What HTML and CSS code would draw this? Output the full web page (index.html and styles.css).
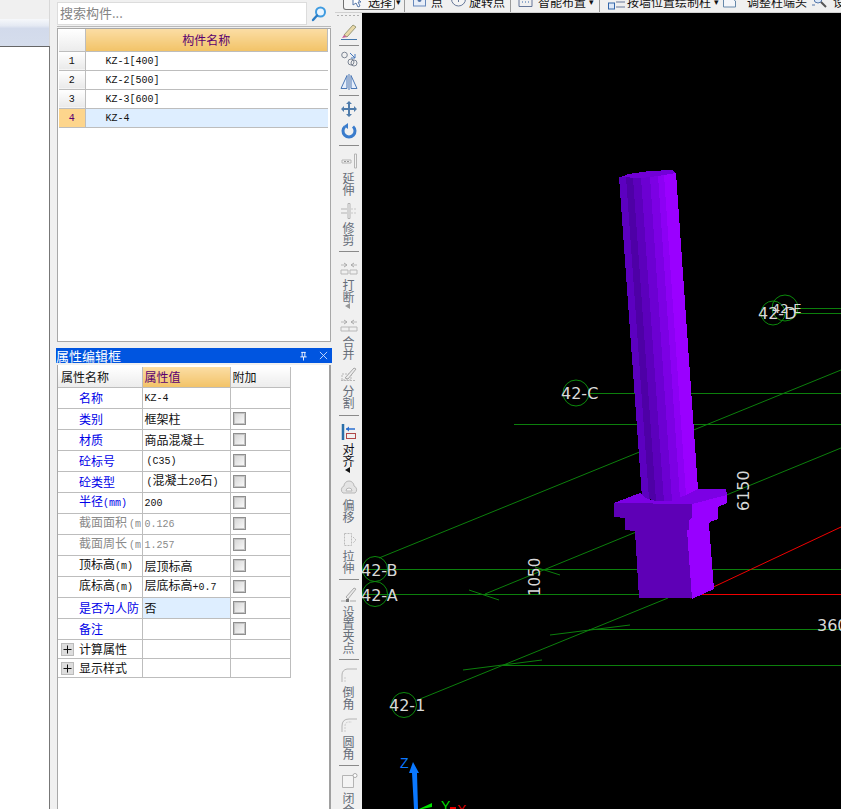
FILE: index.html
```html
<!DOCTYPE html>
<html lang="zh">
<head>
<meta charset="utf-8">
<title>构件属性</title>
<link rel="stylesheet" href="styles.css">
</head>
<body>
<div class="app">
  <aside class="side">
    <div class="side-top"></div>
    <div class="side-head"></div>
    <div class="side-body"></div>
  </aside>

  <section class="panel">
    <div class="search-row">
      <div class="search-box">搜索构件...</div>
      <svg class="search-ic" viewBox="0 0 16 16"><circle cx="9.500" cy="6" r="4.500" fill="#eaf5ff" stroke="#3f9be0" stroke-width="2"/><path d="M6 9.500 2 14" stroke="#2a7cc4" stroke-width="2.400" stroke-linecap="round"/></svg>
    </div>
    <div class="list-frame">
      <table class="list">
        <tr class="list-head"><th class="num"></th><th class="list-title">构件名称</th></tr>
        <tr><td class="num"><span class="lat">1</span></td><td class="lname"><span class="lat">KZ-1[400]</span></td></tr>
        <tr><td class="num"><span class="lat">2</span></td><td class="lname"><span class="lat">KZ-2[500]</span></td></tr>
        <tr><td class="num"><span class="lat">3</span></td><td class="lname"><span class="lat">KZ-3[600]</span></td></tr>
        <tr class="active"><td class="num"><span class="lat">4</span></td><td class="lname"><span class="lat">KZ-4</span></td></tr>
      </table>
    </div>
    <div class="prop-title">
      <span>属性编辑框</span>
      <svg class="pin" viewBox="0 0 10 10"><path d="M2.500 1h5M3.500 1v5M6.500 1v5M1.500 6h7M5 6v4" stroke="#fff" fill="none"/></svg>
      <svg class="close" viewBox="0 0 10 10"><path d="M1 1l8 8M9 1l-8 8" stroke="#cfe0ff" fill="none"/></svg>
    </div>
    <div class="prop-frame">
      <table class="prop">
        <colgroup><col class="c1"><col class="c2"><col class="c3"></colgroup>
        <tr class="prop-head"><th class="h-name">属性名称</th><th class="h-val">属性值</th><th class="h-add">附加</th></tr>
        <tr><td class="n blue">名称</td><td class="v"><span class="lat">KZ-4</span></td><td></td></tr>
        <tr><td class="n blue">类别</td><td class="v">框架柱</td><td><i class="cb"></i></td></tr>
        <tr><td class="n blue">材质</td><td class="v">商品混凝土</td><td><i class="cb"></i></td></tr>
        <tr><td class="n blue">砼标号</td><td class="v"><span class="lat ind">(C35)</span></td><td><i class="cb"></i></td></tr>
        <tr><td class="n blue">砼类型</td><td class="v"><span class="lat ind">(</span>混凝土<span class="lat">20</span>石<span class="lat">)</span></td><td><i class="cb"></i></td></tr>
        <tr><td class="n blue">半径<span class="lat">(mm)</span></td><td class="v"><span class="lat">200</span></td><td><i class="cb"></i></td></tr>
        <tr class="off"><td class="n">截面面积<span class="lat ind">(m</span></td><td class="v"><span class="lat">0.126</span></td><td><i class="cb"></i></td></tr>
        <tr class="off"><td class="n">截面周长<span class="lat ind">(m</span></td><td class="v"><span class="lat">1.257</span></td><td><i class="cb"></i></td></tr>
        <tr><td class="n">顶标高<span class="lat">(m)</span></td><td class="v">层顶标高</td><td><i class="cb"></i></td></tr>
        <tr><td class="n">底标高<span class="lat">(m)</span></td><td class="v">层底标高<span class="lat">+0.7</span></td><td><i class="cb"></i></td></tr>
        <tr><td class="n blue">是否为人防</td><td class="v sel">否</td><td><i class="cb"></i></td></tr>
        <tr><td class="n blue">备注</td><td class="v"></td><td><i class="cb"></i></td></tr>
        <tr class="group"><td class="n"><svg class="plus" viewBox="0 0 13 13"><rect x=".5" y=".5" width="12" height="12" fill="#ddd" stroke="#bbb"/><path d="M2.500 6.500h8M6.500 2.500v8" stroke="#111" fill="none"/></svg>计算属性</td><td></td><td></td></tr>
        <tr class="group"><td class="n"><svg class="plus" viewBox="0 0 13 13"><rect x=".5" y=".5" width="12" height="12" fill="#ddd" stroke="#bbb"/><path d="M2.500 6.500h8M6.500 2.500v8" stroke="#111" fill="none"/></svg>显示样式</td><td></td><td></td></tr>
      </table>
    </div>
  </section>

  <main class="main">
    <div class="topbar">
      <div class="tb-btn">
        <svg class="tb-cur" viewBox="0 0 12 14"><path d="M3 0v10l3-2 2 4 2-1-2-4h3z" fill="#fff" stroke="#5577aa"/></svg>
        <span>选择</span>
      </div>
      <span class="drop m1">▾</span>
      <i class="tb-sep m3"></i>
      <svg class="tb-ic m8" viewBox="0 0 13 14"><rect x=".5" y="-4" width="12" height="13" fill="#e8eef8" stroke="#6688bb"/><circle cx="6.500" cy="3" r="2" fill="#5577aa"/></svg>
      <span class="m5">点</span>
      <svg class="tb-ic wide m8" viewBox="0 0 15 14"><circle cx="7.500" cy="2" r="7" fill="#f4f4f4" stroke="#667799"/><path d="M7.500-1v6M4.500 2h6" stroke="#667799"/></svg>
      <span class="m3">旋转点</span>
      <i class="tb-sep m5"></i>
      <svg class="tb-ic wide m7" viewBox="0 0 15 14"><path d="M1 9.500h13M1 9.500V0M14 9.500V0" stroke="#667799" fill="none"/><path d="M4 5h1M7 5h1M10 5h1" stroke="#3366aa"/></svg>
      <span class="m5">智能布置</span>
      <span class="drop m3">▾</span>
      <i class="tb-sep m5"></i>
      <svg class="tb-ic wide2 m8" viewBox="0 0 17 14"><rect x=".5" y="6" width="6" height="6" fill="#dde8f8" stroke="#3366aa"/><path d="M8 1h9M8 5h9M8 10h9" stroke="#667799"/></svg>
      <span class="m2">按墙位置绘制柱</span>
      <span class="drop m3">▾</span>
      <svg class="tb-ic m4" viewBox="0 0 13 14"><path d="M.5 10V1h8l4 3v6z" fill="#f4f6fa" stroke="#6688aa"/></svg>
      <span class="m11">调整柱端头</span>
      <svg class="tb-ic wide2 m5" viewBox="0 0 17 14"><circle cx="6" cy="2" r="4" fill="#dbe8f8" stroke="#5577aa"/><path d="M9 5l5 5" stroke="#555" stroke-width="2"/><path d="M0 8h3" stroke="#5577aa"/></svg>
      <span class="m4">设</span>
    </div>

    <div class="work">
      <nav class="tools">
        <div class="grip"></div>

        <svg class="ic mt5" viewBox="0 0 18 16"><path d="M4 11 13 1l3 2-9 10z" fill="#e8d8a8" stroke="#9a9a78"/><path d="M4 11l3 2-5 1z" fill="#c8609a"/><path d="M1 15.500h16" stroke="#4477aa"/></svg>
        <div class="sep mt5"></div>
        <svg class="ic mt2" viewBox="0 0 18 16"><circle cx="4.500" cy="4" r="2.800" fill="none" stroke="#7d8694"/><circle cx="11" cy="11" r="3" fill="none" stroke="#7d8694"/><circle cx="14" cy="12" r="3" fill="none" stroke="#7d8694"/><path d="M10 2l5 5M15 3v4h-4" stroke="#4477bb" fill="none"/></svg>
        <svg class="ic mt7" viewBox="0 0 18 16"><path d="M7 1.500v13H1zM11 1.500v13h6z" fill="#e6eefa" stroke="#4a77b5"/><path d="M9 0v16" stroke="#4a77b5"/></svg>
        <div class="sep mt5"></div>
        <svg class="ic mt2" viewBox="0 0 18 16"><path d="M9 1v14M2 8h14" stroke="#4f7cab" stroke-width="2"/><path d="M9 0l3 3H6zM9 16l3-3H6zM1 8l3-3v6zM17 8l-3-3v6z" fill="#4f7cab"/></svg>
        <svg class="ic mt6" viewBox="0 0 18 16"><path d="M5 3.500a6 6 0 1 0 8 0" fill="none" stroke="#3a7ccc" stroke-width="3"/><path d="M8 0v6L4 3z" fill="#3a7ccc"/></svg>
        <div class="sep mt6"></div>

        <div class="tool mt4"><svg class="ic" viewBox="0 0 18 16"><path d="M14.500 1h2v14h-2zM2 7h9v3H2z" fill="#f2f2f2" stroke="#b4b4b4"/><path d="M4 8.500h6" stroke="#999" stroke-dasharray="2 1"/></svg><span class="vt">延伸</span></div>
        <div class="tool mt7"><svg class="ic" viewBox="0 0 18 16"><path d="M8 .5h2v15H8z" fill="#f2f2f2" stroke="#b4b4b4"/><path d="M1 6h6M1 10h6" stroke="#b4b4b4"/><path d="M11 6h6M11 10h6" stroke="#c8c8c8" stroke-dasharray="2 1"/></svg><span class="vt">修剪</span></div>
        <div class="sep mt5"></div>
        <div class="tool mt5"><svg class="ic" viewBox="0 0 18 16"><path d="M1 5h6M11 5h6M1 10h7v4H1zM10 10h7v4h-7z" fill="none" stroke="#b8b8b8"/><path d="M4 3l3 2-3 2M14 3l-3 2 3 2" fill="none" stroke="#aaa"/></svg><span class="vt">打断</span></div>
        <div class="tool-arrow"></div>
        <div class="tool mt8"><svg class="ic" viewBox="0 0 18 16"><path d="M1 5h6M11 5h6M1 10h16v4H1zM9 10v4" fill="none" stroke="#b8b8b8"/><path d="M4 3l3 2-3 2M14 3l-3 2 3 2" fill="none" stroke="#aaa"/></svg><span class="vt">合并</span></div>
        <div class="tool mt6"><svg class="ic" viewBox="0 0 18 16"><path d="M1 14.500h15M2 8h9v6H2z" fill="none" stroke="#b8b8b8" stroke-dasharray="2 1"/><path d="M5 12 14 2l2 1-8 10z" fill="#ececec" stroke="#a8a8a8"/></svg><span class="vt">分割</span></div>
        <div class="sep mt6"></div>
        <div class="tool mt5"><svg class="ic" viewBox="0 0 18 16"><path d="M3 0v16" stroke="#2a6fa8" stroke-width="2.500"/><path d="M6 5h9" stroke="#2a6fd0" stroke-width="1.500"/><path d="M6 5l3-2.500v5z" fill="#2a6fd0"/><rect x="6.500" y="9.500" width="9" height="5" fill="none" stroke="#b04848"/></svg><span class="vt dark">对齐</span></div>
        <div class="tool-arrow dark-arrow"></div>
        <div class="tool mt7"><svg class="ic" viewBox="0 0 18 16"><path d="M3 13a4 4 0 0 1 1-7 5 5 0 0 1 10 0 4 4 0 0 1 1 7z" fill="#e4e4e4" stroke="#b8b8b8"/><path d="M6 11a3 3 0 0 1 6 0z" fill="#f6f6f6" stroke="#b8b8b8"/></svg><span class="vt">偏移</span></div>
        <div class="tool mt8"><svg class="ic" viewBox="0 0 18 16"><path d="M4.500 2.500h7v12h-7zM13 6l3 3-3 3" fill="none" stroke="#bbb" stroke-dasharray="2 1"/></svg><span class="vt">拉伸</span></div>
        <div class="sep mt5"></div>
        <div class="tool mt4"><svg class="ic" viewBox="0 0 18 16"><path d="M6 10 14 1l2 1-8 10z" fill="#e8e8e8" stroke="#aaa"/><path d="M1 14h5M10 14h6" stroke="#aaa"/><rect x="6" y="12" width="3" height="3" fill="#777"/></svg><span class="vt">设置夹点</span></div>
        <div class="sep mt5"></div>
        <div class="tool mt4"><svg class="ic" viewBox="0 0 18 16"><path d="M2 15V8q0-5 5-6h10" fill="none" stroke="#b4b4b4"/><path d="M5 15V9" stroke="#ccc" stroke-dasharray="2 1"/></svg><span class="vt">倒角</span></div>
        <div class="tool mt7"><svg class="ic" viewBox="0 0 18 16"><path d="M2 15V9q0-7 7-7h8" fill="none" stroke="#b4b4b4"/><path d="M5 15V9q0-4 4-4h3" fill="none" stroke="#ccc" stroke-dasharray="2 1"/></svg><span class="vt">圆角</span></div>
        <div class="sep mt5"></div>
        <div class="tool mt4"><svg class="ic" viewBox="0 0 18 16"><path d="M2.500 2.500h11v12h-11z" fill="#f4f4f4" stroke="#b4b4b4"/><circle cx="15" cy="2.500" r="2" fill="#fff" stroke="#aaa"/></svg><span class="vt">闭合</span></div>
      </nav>

      <div class="canvas">
        <svg class="scene" viewBox="362 13 479 796">
          <g class="ln">
            <path d="M362 569.500H841M362 594.500H640M590 393.500H841M514 424.500H841M589 629.500H841M502 665.500H841M790 308.500H841M795 313.500H841"/>
            <path d="M379 558 841 370M485 594 841 448M420 699 668 598"/>
            <path d="M469 590 499 600M535 567 560 575M463 670 542 660M550 635 630 625"/>
          </g>
          <path class="red" d="M690 594.500H841M690 598 841 527"/>
          <g class="ring">
            <circle cx="375" cy="569" r="12.500"/><circle cx="375" cy="594" r="12.500"/>
            <circle cx="404" cy="705" r="12.500"/><circle cx="576" cy="393" r="13"/>
            <circle cx="773" cy="313" r="12"/><circle cx="785" cy="308" r="13"/>
          </g>
          <g class="lbl">
            <text x="361" y="576">42-B</text><text x="361" y="601">42-A</text>
            <text x="389" y="711">42-1</text><text x="561" y="399">42-C</text>
            <text x="772" y="313" class="sm">42-E</text><text x="758" y="319">42-D</text>
            <text x="817" y="631">360</text>
            <text transform="translate(540 596) rotate(-90)" class="dim">1050</text>
            <text transform="translate(749 511) rotate(-90)">6150</text>
          </g>

          <g class="solid">
            <polygon class="c-top" points="619,178 628,174 650,171 672,170 676,174 676,180 619,182"/>
            <polygon fill="#5c00c0" points="619,177 626,177 649,499 642,498"/>
            <polygon fill="#4e00a6" points="626,177 633,178 656,501 649,499"/>
            <polygon fill="#5c00bc" points="633,178 641,178 664,502 656,501"/>
            <polygon fill="#6c00d2" points="641,178 650,177 672,501 664,502"/>
            <polygon fill="#7c00e4" points="650,177 658,176 680,499 672,501"/>
            <polygon fill="#8c00f4" points="658,176 664,175 686,495 680,499"/>
            <polygon fill="#9a00ff" points="664,175 676,173 698,489 686,495"/>

            <polygon class="c-cap" points="614,503 640,493 645,498 656,501 672,501 686,495 698,489 726,489 727,495 692,504"/>
            <polygon class="c-front" points="614,503 692,504 692,518 689,520 689,530 687,530 692,598 639,598 635,531 625,530 625,518 614,517"/>
            <polygon class="c-side" points="692,504 727,495 727,503 718,507 718,519 710,522 709,525 714,589 692,599 687,530 689,530 689,520 692,518"/>
          </g>

          <g class="axis">
            <path class="ax-b" d="M413 762l6 11h-2l1 36h-4l-2-36h-3z"/>
            <path class="ax-g" d="M419 809l13-6v4l-10 2z"/>
            <path class="ax-r" d="M450 807h6v2h-6z"/>
            <text x="400" y="768" class="z">Z</text>
            <text x="441" y="811" class="y">Y</text>
            <text x="457" y="815" class="x">X</text>
          </g>
        </svg>
      </div>
    </div>
  </main>
</div>
</body>
</html>
```
FILE: styles.css
```css
* { box-sizing: border-box; }
html, body { margin: 0; height: 100%; }
body {
  width: 841px; height: 809px; overflow: hidden;
  font: 12px/14px "Noto Sans CJK SC", "Liberation Sans", sans-serif;
  color: #111; background: #f0f0f0;
}
.app { display: grid; grid-template-columns: 50px 285px 506px; height: 809px; }
.lat { font-family: "Liberation Mono", "DejaVu Sans Mono", monospace; font-size: 10px; }
.ind { margin-left: 2px; }

/* left strip */
.side { display: flex; flex-direction: column; height: 809px; }
.side-top { height: 19px; background: #f0f0f0; border-right: 1px solid #d8d8d8; }
.side-head { height: 27px; background: linear-gradient(#f6f8fb 0, #e4e9f3 25%, #d2daeb 35%, #d5ddec 100%); border-right: 1px solid #d8d8d8; }
.side-body { flex: 1; background: #fff; border-top: 1px solid #666; border-right: 1px solid #777; }

/* component panel */
.panel { display: flex; flex-direction: column; padding-left: 7px; background: #f0f0f0; height: 809px; }
.search-row { display: flex; height: 27px; padding-top: 2px; width: 274px; border-bottom: 1px solid #b8b8b8; }
.search-box { width: 250px; height: 23px; background: #fff; border: 1px solid #dcdcdc; padding-left: 2px; font-size: 13px; line-height: 20px; color: #848484; }
.search-ic { width: 16px; height: 16px; margin: 4px 0 0 4px; }
.list-frame { width: 274px; height: 314px; margin-top: 1px; background: #fff; border: 1px solid #a8a8a8; padding: 0 2px 0 1px; }
.list { width: 269px; border-collapse: collapse; table-layout: fixed; }
.list th, .list td { padding: 0; border: 1px solid #bdbdbd; height: 19px; }
.list tr:first-child th { border-top: 0; height: 22px; }
.list .num { width: 26px; background: linear-gradient(#fff, #e9e9e9); border-left: 0; text-align: center; font-weight: 400; }
.list-head .num { background: linear-gradient(#fff, #ececec); }
.list-title { background: linear-gradient(#fbdda4, #f2c368); color: #5a0070; font-weight: 400; border-right: 0; }
.lname { padding-left: 20px !important; background: #fff; border-right: 0 !important; }
.active .num { background: #fdd58c; color: #5a0070; }
.active .lname { background: #deeeff; }
.list .lat { font-size: 10px; }

/* property panel */
.prop-title { display: flex; align-items: center; width: 276px; height: 15px; margin: 6px 0 0 -1px; background: #0055e0; color: #fff; font-size: 13px; line-height: 15px; }
.prop-title span { flex: 1; }
.pin { width: 9px; height: 10px; margin-right: 11px; }
.close { width: 9px; height: 9px; margin-right: 4px; }
.prop-frame { flex: 1; width: 274px; margin-top: 2px; background: #fff; border-left: 1px solid #a8a8a8; border-right: 2px solid #a0a0a0; padding-top: 2px; }
.prop { border-collapse: collapse; table-layout: fixed; width: 232px; }
.c1 { width: 84px; } .c2 { width: 88px; } .c3 { width: 60px; }
.prop th, .prop td { padding: 0; height: 21px; border: 1px solid #bdbdbd; overflow: hidden; white-space: nowrap; text-align: left; font-weight: 400; }
.prop th { border-top: 0; height: 20px; background: linear-gradient(#fff, #ececec); padding-left: 2px; }
.prop th.h-name { padding-left: 3px; }
.prop th.h-val { background: linear-gradient(#fbdda4, #f2c368); color: #5a0070; }
.h-name { border-left: 0 !important; }
.prop td:first-child { border-left: 0; }
.prop .n { padding-left: 21px; }
.prop .v { padding-left: 2px; }
.blue { color: #0000e8; }
.off td { color: #8a8a8a; }
.prop .sel { background: #deeeff; }
.cb { display: block; width: 13px; height: 13px; margin-left: 2px; border: 1px solid #8f8f8f; outline: 1px solid #c4c4c4; outline-offset: -2px; background: linear-gradient(135deg, #d4d4d4, #fbfbfb); }
.prop .group td { height: 19px; }
.prop .group .n { padding-left: 3px; }
.plus { width: 13px; height: 13px; margin-right: 5px; vertical-align: -2px; }

/* main */
.main { display: flex; flex-direction: column; height: 809px; min-width: 0; }
.topbar { display: flex; align-items: flex-start; height: 13px; overflow: hidden; background: #f0f0f0; border-bottom: 1px solid #d0d0d0; padding-left: 8px; white-space: nowrap; line-height: 14px; }
.topbar span { margin-top: -5px; display: block; }
.tb-btn { display: flex; width: 52px; height: 10px; border: 1px solid #707070; border-top: 0; border-radius: 0 0 3px 3px; background: #f6f6f6; padding-left: 6px; flex: none; }
.tb-btn span { margin-left: 6px; }
.tb-cur { width: 12px; height: 14px; margin-top: -5px; }
.drop { font-size: 9px; }
.tb-sep { display: block; flex: none; width: 1px; height: 12px; background: #9a9a9a; }
.tb-ic { flex: none; width: 13px; height: 14px; margin-top: -3px; }
.tb-ic.wide { width: 15px; }
.tb-ic.wide2 { width: 17px; }
.m1 { margin-left: 1px; } .m2 { margin-left: 2px; } .m3 { margin-left: 3px; }
.m4 { margin-left: 4px; } .m5 { margin-left: 5px; } .m6 { margin-left: 6px; }
.m7 { margin-left: 7px; } .m8 { margin-left: 8px; } .m11 { margin-left: 11px; }

.work { flex: 1; display: flex; min-height: 0; }
.tools { width: 27px; flex: none; display: flex; flex-direction: column; align-items: center; background: #f0f0f0; overflow: hidden; }
.grip { flex: none; width: 24px; height: 6px; margin-top: 0; background: repeating-linear-gradient(90deg, #b0b0b0 0 2px, transparent 2px 4px) 0 2px / 100% 1px no-repeat; }
.ic { display: block; flex: none; width: 18px; height: 16px; }
.sep { flex: none; width: 20px; height: 1px; background: #8a8a8a; margin-bottom: 3px; }
.tool { flex: none; display: flex; flex-direction: column; align-items: center; }
.vt { display: block; width: 12px; margin-top: 3px; font-size: 12px; line-height: 12px; color: #666d78; text-align: center; word-break: break-all; }
.vt.dark { color: #101018; }
.tool-arrow { flex: none; width: 0; height: 0; border: 3px solid transparent; border-right: 5px solid #999; border-left: 0; margin-right: 2px; }
.dark-arrow { border-right-color: #111; }
.mt2 { margin-top: 2px; } .mt4 { margin-top: 4px; } .mt5 { margin-top: 5px; } .mt6 { margin-top: 6px; }
.mt7 { margin-top: 7px; } .mt8 { margin-top: 8px; }

.canvas { flex: 1; background: #000; overflow: hidden; }
.scene { display: block; width: 479px; height: 796px; }
.ln path { stroke: #0c7f0c; stroke-width: 1; fill: none; }
.red { stroke: #f00000; stroke-width: 1; fill: none; }
.ring circle { fill: none; stroke: #0c8a0c; stroke-width: 1; }
.lbl text { font: 16px "DejaVu Sans", sans-serif; fill: #d8d8d8; }
.lbl .sm { font-size: 13px; }
.lbl .dim { font-size: 15px; }
.solid polygon { shape-rendering: crispEdges; }
.c-top { fill: #7200d8; }
.c-cap { fill: #7c00e4; }
.c-front { fill: #5e00b6; }
.c-side { fill: #9800ff; }
.ax-b { fill: #0a78ff; }
.ax-g { fill: #00e000; }
.ax-r { fill: #e80000; }
.axis text { font: 14px "Liberation Sans", sans-serif; }
.axis .z { fill: #0a78ff; }
.axis .y { fill: #00dd00; }
.axis .x { fill: #dd0000; }
```
